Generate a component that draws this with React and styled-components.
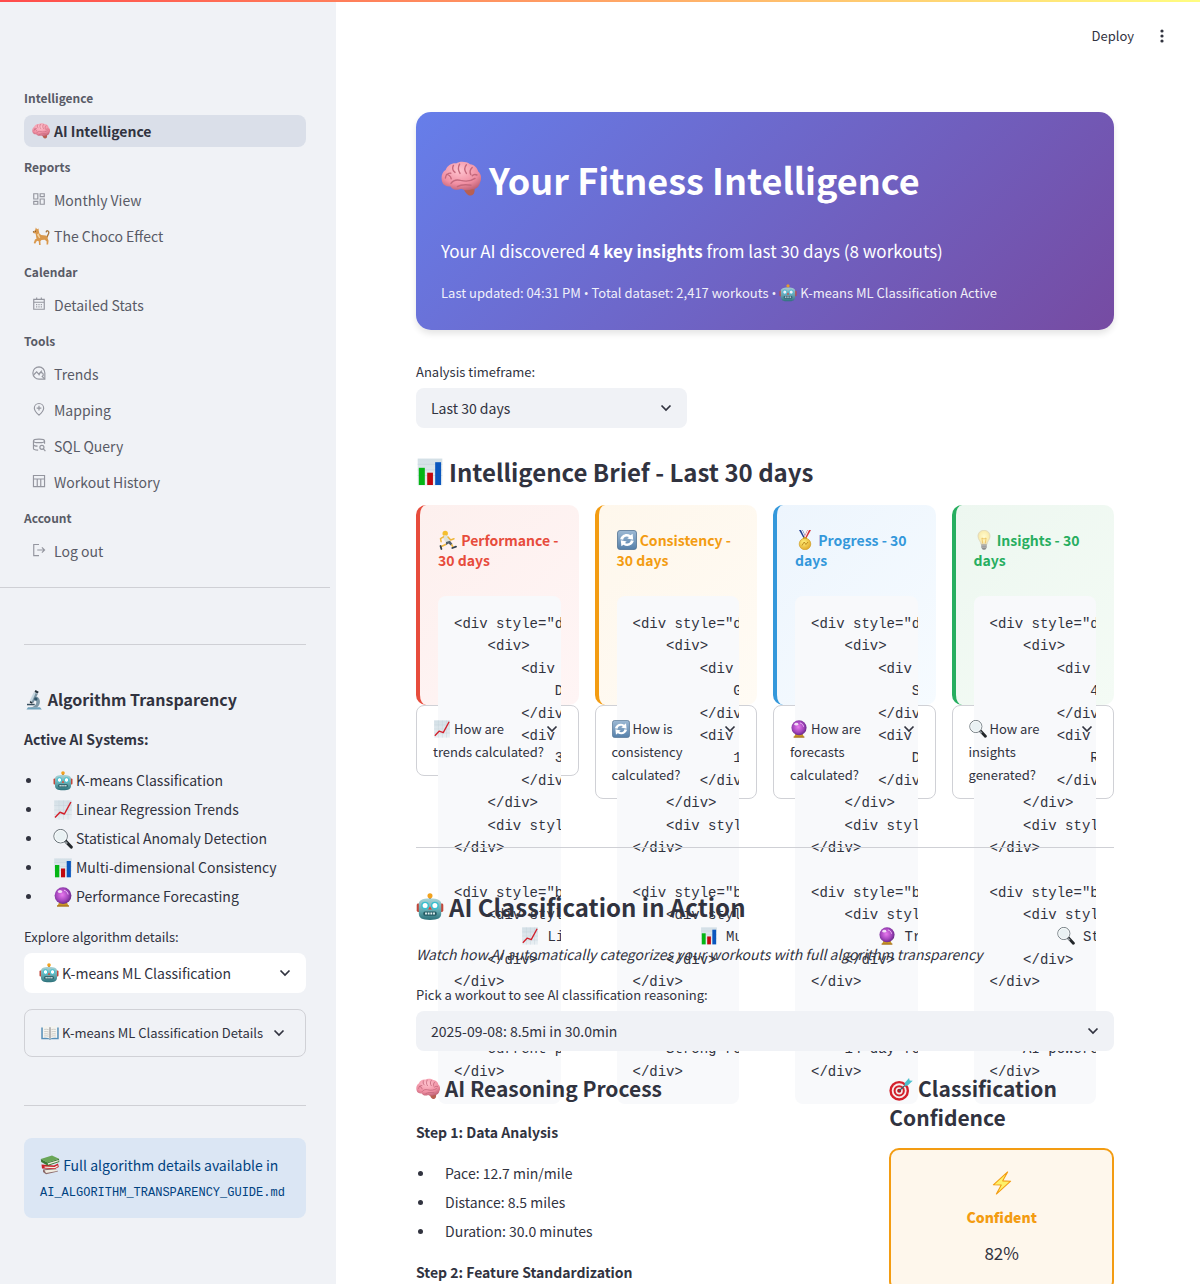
import React from "react";
import styled, { createGlobalStyle } from "styled-components";

const SANS = '"Noto Sans CJK SC", "Noto Sans", sans-serif';
const MONO = '"Liberation Mono", monospace';

const GlobalStyle = createGlobalStyle`
  *, *::before, *::after { box-sizing: border-box; }
  body {
    margin: 0;
    background: #fff;
    color: #31333f;
    font: 14px/22px ${SANS};
  }
  h1, h2, h3, p, ul, pre { margin: 0; padding: 0; }
  button, select { font: inherit; color: inherit; }
`;

/* ---------- pictographs ---------- */

const Glyph = styled.svg`
  display: inline-block;
  flex: none;
  width: ${(p) => p.$size}px;
  height: ${(p) => p.$size}px;
  margin: -4px 0;
  vertical-align: baseline;
`;

const HiddenDefs = styled.svg`
  position: absolute;
  width: 0;
  height: 0;
`;

function Defs() {
  return (
    <HiddenDefs aria-hidden="true">
      <defs>
        <linearGradient id="paper" x1="0" y1="0" x2="0" y2="1">
          <stop offset="0" stopColor="#d3dfe6" />
          <stop offset="1" stopColor="#e9eff3" />
        </linearGradient>
        <radialGradient id="pink" cx=".45" cy=".3" r=".8">
          <stop offset="0" stopColor="#ffc4cf" />
          <stop offset=".6" stopColor="#f08fa3" />
          <stop offset="1" stopColor="#b5576a" />
        </radialGradient>
        <linearGradient id="teal" x1="0" y1="0" x2="0" y2="1">
          <stop offset="0" stopColor="#a9d3d6" />
          <stop offset=".6" stopColor="#5fa5ac" />
          <stop offset="1" stopColor="#2b7079" />
        </linearGradient>
        <radialGradient id="orb" cx=".45" cy=".45" r=".6">
          <stop offset="0" stopColor="#e879ee" />
          <stop offset=".6" stopColor="#a446bd" />
          <stop offset="1" stopColor="#5c2380" />
        </radialGradient>
        <linearGradient id="steel" x1="0" y1="0" x2="0" y2="1">
          <stop offset="0" stopColor="#9db9d4" />
          <stop offset="1" stopColor="#5580aa" />
        </linearGradient>
        <radialGradient id="gold" cx=".4" cy=".35" r=".7">
          <stop offset="0" stopColor="#fff07a" />
          <stop offset="1" stopColor="#e0a526" />
        </radialGradient>
        <radialGradient id="bulb" cx=".5" cy=".45" r=".6">
          <stop offset="0" stopColor="#fffbd0" />
          <stop offset=".6" stopColor="#fbeeb0" />
          <stop offset="1" stopColor="#ddd6bd" />
        </radialGradient>
      </defs>
    </HiddenDefs>
  );
}

const art = {
  brain: (
    <>
      <path d="M11 13.500c.5 2.500 2 5 3.900 4.800 1.800-.2 2.300-2.300 1.600-4.500z" fill="#b85f51" />
      <path d="M.6 11.500C-.2 9 .5 6.500 2.300 5.500 3.200 3.200 5.400 2 7.500 2.200c2-1.200 5.200-1 7 .4 2.200.2 3.700 1.900 4.100 3.700 1.600 1.300 1.900 3.800.9 5.400-.4 2.200-2.100 3.500-3.900 3.400-2.100.9-4.200.6-5.500-.2-2.100 1.100-4.600.3-5.300-1.200-2.100.2-3.700-.600-4.200-2.200z" fill="url(#pink)" />
      <path d="M2.200 9.500c.2-1.600 1.500-2.500 2.700-2.400M5 12.200c1.200-1.700 3-2 4.800-1.500 2.500.6 5.200.4 7.200-1M6.200 3.200c-.6 1.200-.3 2.700.8 3.500M9.300 2.600c-.8 1.400-.8 3 .2 4.600M12.700 2.900c-1 1.200-1 2.900 0 4.300M15.600 4.200c-1.100 1-1.300 2.300-.7 3.600M18 8c-1-.5-1.800-.3-2.400.4M8.200 13.800c1.800-1.100 4.500-1 6.800-.7M2.700 7.700c1 .1 2.200 1 2.400 2.200" fill="none" stroke="#c4687c" strokeWidth=".7" strokeLinecap="round" />
    </>
  ),
  dog: (
    <>
      <path d="M17 11c-.3-1.800 1.800-2.800 1.700-5-.1-2.200-2.500-2.300-2.900-.6" fill="none" stroke="#a9763f" strokeWidth="1.500" strokeLinecap="round" />
      <path d="M.8 5.500l2.600-1.800L4.300.5l1.300 2 1.700-.9.2 2.700.7 3 2 1.600 4.800.5c1.900.3 2.700 1.900 2.400 3.400l1 2.600-.5 4.100h-1.800l.2-3.400-2.100-1.900-3.600.2-1.300 1.500.3 4.200H7.900l-.4-4.200-2-.5-2 3.200-1.600-.8 1.400-3.900 1.700-.9L4 7.300 2 7z" fill="#d9984c" />
      <path d="M5.500 8.500l2.500 4 1.200-.6-2-5z" fill="#f3d3a0" />
      <path d="M3.400 4.800h.9" stroke="#4a2c12" strokeWidth=".9" />
      <path d="M.8 5.500l1.100-.8.400 1.100z" fill="#3a2413" />
    </>
  ),
  robot: (
    <>
      <path d="M10 2v3" stroke="#9a6a3c" strokeWidth="1.600" />
      <circle cx="10" cy="2" r="1.800" fill="#f2a21e" />
      <rect x=".5" y="7.500" width="3" height="6" rx="1" fill="#c4473a" />
      <rect x="16.500" y="7.500" width="3" height="6" rx="1" fill="#c4473a" />
      <path d="M2 8c0-2.700 2-4 8-4s8 1.300 8 4v6.700c0 3.200-2.300 4.600-8 4.600s-8-1.400-8-4.600z" fill="url(#teal)" />
      <circle cx="6.500" cy="9" r="2.300" fill="#fff" stroke="#37bfd0" strokeWidth="1" />
      <circle cx="13.500" cy="9" r="2.300" fill="#fff" stroke="#37bfd0" strokeWidth="1" />
      <path d="M10 9.500l1.300 2.300H8.700z" fill="#e0452f" />
      <rect x="5.200" y="13.300" width="9.600" height="2.900" rx="1.200" fill="#245a63" />
      <path d="M6.500 14.700h7" stroke="#e6f4f4" strokeWidth="1.400" strokeDasharray="1.300 .6" />
    </>
  ),
  microscope: (
    <>
      <path d="M2.500 19.500l1.500-2.300h12l1.800 2.300z" fill="#6fa2bb" />
      <path d="M12.500 6.500c4.400 1.600 4.700 8 .4 11H6.700c4.700-1 7-4.600 4.800-8z" fill="#7d97a6" />
      <path d="M3 13.800h7.700v1.500H3z" fill="#384f5e" />
      <path d="M9.800 2.200l3.900 1.900-4.200 8.600-3.900-1.800z" fill="#c5d6df" />
      <path d="M11.700 3l2 1.100-4.200 8.700-1.800-.9z" fill="#7891a0" />
      <path d="M11.500.1l3.200 1.600-1 1.900-3.200-1.600z" fill="#26323b" />
      <path d="M6 11l2.700 1.200-.6 1.500-2.300-1z" fill="#26323b" />
      <circle cx="11.800" cy="9" r="1.700" fill="#31566b" />
    </>
  ),
  trend: (
    <>
      <rect x="1.200" y=".4" width="17.600" height="19.200" fill="url(#paper)" />
      <path d="M1.200 5.500h17.600M1.200 10h17.600M1.200 14.500h17.600M6 .4v19.200M10.500 .4v19.200M15 .4v19.200" stroke="#c2d0d8" strokeWidth=".4" />
      <path d="M2 17.500l5-5.200 4.400 1.700L17.900 2" fill="none" stroke="#d2212c" strokeWidth="1.500" strokeLinejoin="round" />
    </>
  ),
  bars: (
    <>
      <rect x="1.200" y=".4" width="17.600" height="19.200" fill="url(#paper)" />
      <path d="M1.200 4.500h17.600M1.200 8.500h17.600M1.200 12.500h17.600" stroke="#c2d0d8" strokeWidth=".4" />
      <rect x="2" y="7" width="4.300" height="12.300" fill="#04b514" />
      <rect x="8" y="10.500" width="4.100" height="8.800" fill="#c2080f" />
      <rect x="13.700" y="3" width="4.200" height="16.300" fill="#0a56be" />
    </>
  ),
  search: (
    <>
      <path d="M12.800 12.300l5.400 5.700" stroke="#22262a" strokeWidth="3.200" strokeLinecap="round" />
      <path d="M12.200 12.600l2 2" stroke="#8f979c" strokeWidth="2" />
      <circle cx="7.600" cy="7.200" r="6.700" fill="#e9f1f3" stroke="#5b666c" strokeWidth="1" />
      <circle cx="7.600" cy="7.200" r="5.800" fill="none" stroke="#fff" strokeWidth=".8" />
    </>
  ),
  orb: (
    <>
      <path d="M4.500 19l2-4.500h7l2 4.500z" fill="#c99727" />
      <path d="M4 18.300h12v1.400H4z" fill="#a8741c" />
      <circle cx="10" cy="8.600" r="8.400" fill="url(#orb)" />
      <ellipse cx="7" cy="4.600" rx="2.200" ry="1.500" fill="#fff" opacity=".8" />
      <path d="M11 3.200c2.200.5 3.800 2.200 4.100 4.300" stroke="#f5c8fa" strokeWidth=".9" fill="none" />
    </>
  ),
  book: (
    <>
      <path d="M.3 4h19.400v13H11l-1 .8-1-.8H.3z" fill="#568fb8" />
      <path d="M2 2.800c3-.8 6-.6 8 .8 2-1.400 5-1.600 8-.8v12.700c-3-.6-6-.4-8 .8-2-1.200-5-1.400-8-.8z" fill="#f5f4f0" />
      <path d="M10 3.600v12.600" stroke="#8c8c8c" strokeWidth="1.300" />
      <path d="M3.500 6c1.800-.3 3.600-.2 5 .3M3.500 8.500c1.800-.3 3.600-.2 5 .3M3.500 11c1.800-.3 3.600-.2 5 .3M3.500 13.300c1.800-.3 3.600-.2 5 .3M16.500 6c-1.800-.3-3.600-.2-5 .3M16.500 8.500c-1.800-.3-3.600-.2-5 .3M16.500 11c-1.800-.3-3.600-.2-5 .3M16.500 13.300c-1.800-.3-3.600-.2-5 .3" fill="none" stroke="#b5b5b0" strokeWidth=".7" />
    </>
  ),
  books: (
    <>
      <path d="M3 14.500l12-1.500 3 3.500L6 19.300l-3-2.300z" fill="#8b6a6a" />
      <path d="M4.500 15.200l12-1 .8 1.800L6 17.900z" fill="#f0ece0" />
      <path d="M1.500 9.500l12.500 1 4-2 .8 3.500-4 2L2 13.500z" fill="#c81f28" />
      <path d="M4.500 11.500l10 .5 3-1.700.2 1.400-3 1.500-10-.5z" fill="#f3eee2" />
      <path d="M.8 4L12 .5l7 3.300L7.500 7.500z" fill="#69a657" />
      <path d="M.8 4L7.500 7.500l11.500-3.700.3 3.200L8 10.700 1.200 7z" fill="#3d7a34" />
      <path d="M7.800 8.300l10.800-3.300.1 1.300L8 9.700z" fill="#f0ece0" />
    </>
  ),
  runner: (
    <>
      <circle cx="7.200" cy="3.400" r="2.700" fill="#f5be2e" />
      <path d="M4.800 5.900c1.900-1.100 4.600-.5 5.800 1.300l1.400 4.300-3.800 1.600-2.800-4z" fill="#dfe2dc" />
      <path d="M5.500 6.900L2.500 8.600l.6 3.100M10 7.100l2.700 2.900 3.300-1.300" fill="none" stroke="#eeb63b" strokeWidth="1.500" strokeLinecap="round" strokeLinejoin="round" />
      <path d="M8 12l4-1.200 2.500 3.200-1.800 1.400-2.100-1.800-2.800 1.700z" fill="#55606b" />
      <path d="M13.500 14.500l1.500 2.600M8 14.300l-2.500 1.200-2.800 1.300" stroke="#eeb63b" strokeWidth="1.600" fill="none" />
      <path d="M14.300 18l3.700-1.400M2.500 16l.9 3" stroke="#34404c" strokeWidth="1.800" strokeLinecap="round" />
    </>
  ),
  cycle: (
    <>
      <rect x=".5" y=".5" width="19" height="19" rx="2.500" fill="url(#steel)" stroke="#537494" strokeWidth=".8" />
      <path d="M3.200 9.200C4.200 5 9.300 2.500 13.600 5.300l2-1.600.6 6.100-5.900-1.400 1.700-1.400C9.600 5.700 6.500 6.800 6.200 9.700zM16.800 10.800c-1 4.200-6.100 6.700-10.400 3.900l-2 1.600-.6-6.100 5.900 1.400L8 13c2.400 1.300 5.500.2 5.800-2.700z" fill="#fff" />
    </>
  ),
  medal: (
    <>
      <path d="M4 0h3.600l3.700 8-2 1.500z" fill="#233f93" />
      <path d="M6 0h1.200l3.500 7.500-.8.600z" fill="#fff" />
      <path d="M16 0h-3.600L8.700 8l2 1.500z" fill="#d52f3a" />
      <path d="M14 0h-1.200L9.300 7.500l.8.600z" fill="#fff" />
      <rect x="8" y="7.300" width="4" height="2" rx=".6" fill="#c79a1d" />
      <circle cx="10" cy="14" r="5.800" fill="url(#gold)" stroke="#cc9819" strokeWidth=".6" />
      <path d="M7 15.500l2.200-3.500 1.700 2.500L13 12" stroke="#b9851a" strokeWidth=".9" fill="none" />
    </>
  ),
  bulb: (
    <>
      <path d="M10 .3C6.200.3 3.900 3 3.900 6.200c0 3.300 2.700 4.800 3.100 8.400h6c.4-3.600 3.100-5.100 3.100-8.400C16.100 3 13.800.3 10 .3z" fill="url(#bulb)" stroke="#d8cfae" strokeWidth=".5" />
      <path d="M8.700 13.500L7.900 8l2.100 1 2.100-1-.8 5.500" fill="none" stroke="#e8b84a" strokeWidth=".7" />
      <path d="M7.300 14.500h5.400v3.300l-1.500 2H8.800l-1.500-2z" fill="#8d8f8e" />
      <path d="M7.300 15.700h5.400M7.300 17.200h5.400" stroke="#d3d4d2" strokeWidth=".6" />
    </>
  ),
  target: (
    <>
      <circle cx="8.500" cy="11.500" r="8.200" fill="#d4202b" />
      <circle cx="8.500" cy="11.500" r="6.200" fill="#f6eeee" />
      <circle cx="8.500" cy="11.500" r="4.700" fill="#d4202b" />
      <circle cx="8.500" cy="11.500" r="3" fill="#f6eeee" />
      <circle cx="8.500" cy="11.500" r="1.700" fill="#b8141f" />
      <path d="M8.500 11.500L16 4.500" stroke="#3c5f68" strokeWidth="1" />
      <path d="M13.200 4.800L16.700.8l.5 2.200 2.600.2-4.200 3.900-2.700.3z" fill="#4cc0cc" />
    </>
  ),
  bolt: (
    <path d="M14.700.8L2.800 11.500l6.600.2L5.300 19.200 17.200 8.500l-6.600-.3z" fill="#fdf16a" stroke="#f39c12" strokeWidth=".9" strokeLinejoin="round" />
  ),
};

function Emoji({ name, size = 20 }) {
  return (
    <Glyph $size={size} viewBox="0 0 20 20" aria-hidden="true">
      {art[name]}
    </Glyph>
  );
}

/* ---------- line icons ---------- */

const LineSvg = styled.svg`
  flex: none;
  width: 14px;
  height: 14px;
  margin: 0 4px 2px 0;
  fill: none;
  stroke: #94969f;
  stroke-width: 2;
`;

const lines = {
  dashboard: <path d="M3 3h7v9H3zM14 3h7v5h-7zM14 12h7v9h-7zM3 16h7v5H3z" />,
  calendar: (
    <>
      <path d="M3 4h18v17H3zM3 9h18M8 1v4M16 1v4" />
      <path d="M7 13h11M7 17h11" strokeDasharray="2 2" />
    </>
  ),
  trends: (
    <>
      <path d="M12 1.500a10.500 10.500 0 1 0 0 21h10V12A10.500 10.500 0 0 0 12 1.500z" />
      <path d="M3 15l5-5 3.500 4L17 8M12.500 16a3.500 3.500 0 1 1 5 2l4 4" />
    </>
  ),
  pin: <path d="M12 22.500c5.500-5 8-8.500 8-12a8 8 0 0 0-16 0c0 3.500 2.500 7 8 12zM12 6.500v8M8 10.500h8" />,
  database: (
    <>
      <ellipse cx="12" cy="5" rx="9.500" ry="3" />
      <path d="M2.500 5v13c0 1.500 3 2.700 8 2.900M2.500 11.500c.5 1.500 3 2.300 7 2.500M21.500 5v5" />
      <circle cx="17" cy="16" r="3.500" />
      <path d="M19.500 18.500l3.500 4" />
    </>
  ),
  table: <path d="M2.500 2.500h19v19h-19zM2.500 8.500h19M9 8.500v13M15 8.500v13" />,
  logout: <path d="M12 2.500H3v19h9M9 12h12M17 7.500l4.500 4.500-4.500 4.500" />,
};

function LineIcon({ name }) {
  return (
    <LineSvg viewBox="0 0 24 24" aria-hidden="true">
      {lines[name]}
    </LineSvg>
  );
}

const ChevronSvg = styled.svg`
  flex: none;
  width: 12px;
  height: 8px;
  fill: none;
  stroke: #31333f;
  stroke-width: 1.700;
  pointer-events: none;
`;

const Chevron = () => (
  <ChevronSvg viewBox="0 0 12 8" aria-hidden="true">
    <path d="M1.500 1.500L6 6l4.500-4.500" />
  </ChevronSvg>
);

/* ---------- shell ---------- */

const Page = styled.div`
  display: flex;
  flex-direction: column;
  height: 100vh;
  overflow: hidden;
`;

const Ribbon = styled.div`
  flex: none;
  height: 2px;
  background: linear-gradient(90deg, #ff4b4b, #fffd80);
`;

const Shell = styled.div`
  display: flex;
  flex: 1;
  min-height: 0;
`;

const Sidebar = styled.aside`
  flex: none;
  width: 336px;
  padding: 78px 6px 66px 0;
  overflow-y: auto;
  scrollbar-width: none;
  background: #f0f2f6;
`;

const Main = styled.main`
  flex: 1;
  min-width: 0;
  overflow-y: auto;
  scrollbar-width: none;
`;

const TopBar = styled.header`
  display: flex;
  align-items: center;
  justify-content: flex-end;
  gap: 16px;
  height: 68px;
  padding: 0 26px;
`;

const BarButton = styled.button`
  display: flex;
  align-items: center;
  justify-content: center;
  min-width: 24px;
  padding: 0;
  border: 0;
  background: none;
  font-size: 13px;
`;

const Content = styled.div`
  padding: 42px 86px 80px 80px;
`;

const Rule = styled.hr`
  height: 1px;
  margin: ${(p) => p.$top}px 0 ${(p) => p.$bottom}px;
  border: 0;
  background: #cfd0d5;
`;

/* ---------- navigation ---------- */

const Nav = styled.nav`
  padding: 0 24px;
`;

const NavSection = styled.section`
  display: flex;
  flex-direction: column;
  gap: 4px;
  padding-bottom: 2px;
`;

const NavHeading = styled.h2`
  padding: 7px 0 3px;
  color: #595b66;
  font-size: 12px;
  font-weight: 600;
  line-height: 21px;
`;

const NavLink = styled.a`
  display: flex;
  align-items: center;
  gap: 4px;
  height: 32px;
  padding: 0 8px;
  border-radius: 8px;
  background: ${(p) => (p.$active ? "#dadfe9" : "transparent")};
  color: ${(p) => (p.$active ? "#31333f" : "#595b66")};
  font-weight: ${(p) => (p.$active ? 600 : 400)};
  text-decoration: none;
`;

const IconSlot = styled.span`
  display: flex;
  justify-content: center;
  width: 18px;
`;

const navigation = [
  ["Intelligence", [["AI Intelligence", "brain"]]],
  ["Reports", [["Monthly View", "dashboard"], ["The Choco Effect", "dog"]]],
  ["Calendar", [["Detailed Stats", "calendar"]]],
  ["Tools", [["Trends", "trends"], ["Mapping", "pin"], ["SQL Query", "database"], ["Workout History", "table"]]],
  ["Account", [["Log out", "logout"]]],
];

function Navigation() {
  return (
    <Nav aria-label="Pages">
      {navigation.map(([heading, items]) => (
        <NavSection key={heading}>
          <NavHeading>{heading}</NavHeading>
          {items.map(([label, icon]) => (
            <NavLink key={label} href="#" $active={label === "AI Intelligence"}>
              <IconSlot>{art[icon] ? <Emoji name={icon} size={18} /> : <LineIcon name={icon} />}</IconSlot>
              {label}
            </NavLink>
          ))}
        </NavSection>
      ))}
    </Nav>
  );
}

/* ---------- shared widgets ---------- */

const Label = styled.label`
  display: block;
  margin-bottom: 5px;
  font-size: 13px;
  line-height: 22px;
`;

const SelectBox = styled.div`
  display: flex;
  align-items: center;
  gap: 3px;
  height: 40px;
  padding: 0 15px;
  border-radius: 8px;
  background: ${(p) => (p.$light ? "#fff" : "#f0f2f6")};
`;

const Select = styled.select`
  flex: 1;
  min-width: 0;
  height: 40px;
  padding: 0;
  border: 0;
  appearance: none;
  background: none;
`;

function SelectField({ id, label, value, icon, light }) {
  return (
    <div>
      <Label htmlFor={id}>{label}</Label>
      <SelectBox $light={light}>
        {icon && <Emoji name={icon} />}
        <Select id={id}>
          <option>{value}</option>
        </Select>
        <Chevron />
      </SelectBox>
    </div>
  );
}

const Expander = styled.details`
  border: 1px solid #d0d1d6;
  border-radius: 8px;
`;

const Summary = styled.summary`
  position: relative;
  display: flex;
  align-items: flex-start;
  justify-content: space-between;
  padding: 11px 20px 12px 16px;
  font-size: 13px;
  line-height: 23px;
  list-style: none;

  ${ChevronSvg} { margin-top: 8px; }
`;

const Bullets = styled.ul`
  list-style: none;

  li {
    display: flex;
    align-items: center;
    gap: 3px;
    line-height: 29px;
  }

  li::before {
    content: "";
    width: 5px;
    height: 5px;
    margin: 0 19px 0 2px;
    border-radius: 50%;
    background: #31333f;
  }
`;

/* ---------- sidebar details ---------- */

const SideBody = styled.div`
  padding: 0 24px;
`;

const SideTitle = styled.h2`
  margin-bottom: 17px;
  font-size: 16px;
  font-weight: 600;
  line-height: 24px;
`;

const Strong = styled.p`
  margin-bottom: 16px;
  font-weight: 600;
`;

const SideForm = styled.div`
  display: grid;
  gap: 16px;
  margin-top: 15px;
`;

const Info = styled.div`
  padding: 15px 16px;
  border-radius: 8px;
  background: #dbe6f4;
  color: #004280;
  line-height: 25px;
  white-space: nowrap;

  code { font: 12px ${MONO}; }
`;

/* ---------- hero ---------- */

const Hero = styled.section`
  margin-bottom: 31px;
  padding: 25px;
  border-radius: 15px;
  background: linear-gradient(135deg, #667eea 0%, #764ba2 100%);
  box-shadow: 0 4px 6px rgba(0, 0, 0, 0.1);
  color: #fff;

  h1 {
    display: flex;
    align-items: center;
    gap: 8px;
    padding: 17px 0 23px;
    font-size: 36px;
    font-weight: 700;
    line-height: 50px;
  }
`;

const Lead = styled.p`
  margin-top: 9px;
  font-size: 17px;
  line-height: 30px;
`;

const Meta = styled.p`
  margin-top: 15px;
  font-size: 13px;
  line-height: 24px;
  opacity: 0.9;
`;

const Dot = styled.span`
  font-family: "Open Sans", sans-serif;
`;

/* ---------- brief ---------- */

const Narrow = styled.div`
  max-width: 271px;
`;

const SectionTitle = styled.h2`
  display: flex;
  align-items: center;
  gap: 5px;
  margin: ${(p) => p.$top}px 0 ${(p) => p.$bottom}px;
  font-size: 24px;
  font-weight: 600;
  line-height: 34px;
`;

const CardGrid = styled.div`
  display: grid;
  grid-template-columns: repeat(4, minmax(0, 1fr));
  gap: 16px;
`;

const Card = styled.article`
  height: 200px;
  padding: 25px 18px;
  border-left: 4px solid ${(p) => p.$accent};
  border-radius: 10px;
  background: linear-gradient(135deg, ${(p) => p.$from}, ${(p) => p.$to});

  h3 {
    margin-bottom: 26px;
    color: ${(p) => p.$accent};
    font-size: 14px;
    font-weight: 700;
    line-height: 20px;
  }
`;

const Code = styled.pre`
  position: relative;
  padding: 17px 16px 21px;
  overflow: hidden;
  border-radius: 8px;
  background: #f8f9fb;
  font: 14px/1.6 ${MONO};
`;

const cards = [
  {
    icon: "runner", title: "Performance - 30 days", accent: "#e74c3c", from: "#fdf0ee", to: "#fff5f5",
    value: "D", detail: "3", method: ["trend", "Li"], note: "Current p",
    ask: "How are trends calculated?", askIcon: "trend",
  },
  {
    icon: "cycle", title: "Consistency - 30 days", accent: "#f39c12", from: "#fef7ec", to: "#fffbf4",
    value: "G", detail: "1", method: ["bars", "Mu"], note: "Strong ro",
    ask: "How is consistency calculated?", askIcon: "cycle",
  },
  {
    icon: "medal", title: "Progress - 30 days", accent: "#3498db", from: "#edf5fd", to: "#f6fbff",
    value: "S", detail: "D", method: ["orb", "Tr"], note: "14-day fo",
    ask: "How are forecasts calculated?", askIcon: "orb",
  },
  {
    icon: "bulb", title: "Insights - 30 days", accent: "#27ae60", from: "#edf7f0", to: "#f4fbf5",
    value: "4", detail: "R", method: ["search", "St"], note: "AI-powere",
    ask: "How are insights generated?", askIcon: "search",
  },
];

function BriefCard({ card }) {
  return (
    <div>
      <Card $accent={card.accent} $from={card.from} $to={card.to}>
        <h3>
          <Emoji name={card.icon} /> {card.title}
        </h3>
        <Code>
          {`<div style="d
    <div>
        <div 
            ${card.value}
        </div
        <div 
            ${card.detail}
        </div
    </div>
    <div styl
</div>

<div style="b
    <div styl
        `}
          <Emoji name={card.method[0]} size={18} />
          {` ${card.method[1]}
    </div>
</div>

<div style="m
    ${card.note}
</div>`}
        </Code>
      </Card>
      <Expander>
        <Summary>
          <span>
            <Emoji name={card.askIcon} size={18} /> {card.ask}
          </span>
          <Chevron />
        </Summary>
      </Expander>
    </div>
  );
}

/* ---------- classification ---------- */

const Overlay = styled.section`
  position: relative;
`;

const Italic = styled.p`
  margin-bottom: 19px;
  font-style: italic;
`;

const Split = styled.div`
  display: grid;
  grid-template-columns: 2fr 1fr;
  gap: 24px;
  margin-top: 23px;
`;

const SubTitle = styled.h3`
  margin-bottom: ${(p) => p.$bottom}px;
  font-size: 21px;
  font-weight: 600;
  line-height: 29px;
`;

const Step = styled.div`
  margin-bottom: 15px;
`;

const Confidence = styled.div`
  display: flex;
  flex-direction: column;
  align-items: center;
  padding: 25px 16px;
  border: 2px solid #f39c12;
  border-radius: 10px;
  background: #fef7ec;

  strong {
    margin-top: 15px;
    color: #f39c12;
    font-weight: 800;
  }

  span {
    margin-top: 14px;
    font-size: 17px;
  }
`;

export default function App() {
  return (
    <Page>
      <GlobalStyle />
      <Defs />
      <Ribbon />
      <Shell>
        <Sidebar>
          <Navigation />
          <Rule $top={18} $bottom={56} />
          <SideBody>
            <Rule $top={0} $bottom={42} />
            <SideTitle>
              <Emoji name="microscope" /> Algorithm Transparency
            </SideTitle>
            <Strong>Active AI Systems:</Strong>
            <Bullets>
              <li><Emoji name="robot" /> K-means Classification</li>
              <li><Emoji name="trend" /> Linear Regression Trends</li>
              <li><Emoji name="search" /> Statistical Anomaly Detection</li>
              <li><Emoji name="bars" /> Multi-dimensional Consistency</li>
              <li><Emoji name="orb" /> Performance Forecasting</li>
            </Bullets>
            <SideForm>
              <SelectField id="algorithm" label="Explore algorithm details:" value="K-means ML Classification" icon="robot" light />
              <Expander>
                <Summary>
                  <span><Emoji name="book" size={18} /> K-means ML Classification Details</span>
                  <Chevron />
                </Summary>
              </Expander>
            </SideForm>
            <Rule $top={48} $bottom={32} />
            <Info>
              <Emoji name="books" /> Full algorithm details available in
              <br />
              <code>AI_ALGORITHM_TRANSPARENCY_GUIDE.md</code>
            </Info>
          </SideBody>
        </Sidebar>
        <Main>
          <TopBar>
            <BarButton>Deploy</BarButton>
            <BarButton aria-label="Menu">
              <svg width="4" height="14" viewBox="0 0 4 14" fill="#31333f" aria-hidden="true">
                <circle cx="2" cy="2" r="1.600" />
                <circle cx="2" cy="7" r="1.600" />
                <circle cx="2" cy="12" r="1.600" />
              </svg>
            </BarButton>
          </TopBar>
          <Content>
            <Hero>
              <h1><Emoji name="brain" size={40} />Your Fitness Intelligence</h1>
              <Lead>Your AI discovered <b>4 key insights</b> from last 30 days (8 workouts)</Lead>
              <Meta>
                Last updated: 04:31 PM <Dot>•</Dot> Total dataset: 2,417 workouts <Dot>•</Dot> <Emoji name="robot" size={18} /> K-means ML Classification Active
              </Meta>
            </Hero>
            <Narrow>
              <SelectField id="timeframe" label="Analysis timeframe:" value="Last 30 days" />
            </Narrow>
            <SectionTitle $top={27} $bottom={16}>
              <Emoji name="bars" size={28} />Intelligence Brief - Last 30 days
            </SectionTitle>
            <CardGrid>
              {cards.map((card) => <BriefCard key={card.title} card={card} />)}
            </CardGrid>
            <Overlay>
              <Rule $top={48} $bottom={42} />
              <SectionTitle $top={0} $bottom={19}>
                <Emoji name="robot" size={28} />AI Classification in Action
              </SectionTitle>
              <Italic>Watch how AI automatically categorizes your workouts with full algorithm transparency</Italic>
              <SelectField id="workout" label="Pick a workout to see AI classification reasoning:" value="2025-09-08: 8.5mi in 30.0min" />
              <Split>
                <div>
                  <SubTitle $bottom={18}><Emoji name="brain" size={24} /> AI Reasoning Process</SubTitle>
                  <Step>
                    <Strong>Step 1: Data Analysis</Strong>
                    <Bullets>
                      <li>Pace: 12.7 min/mile</li>
                      <li>Distance: 8.5 miles</li>
                      <li>Duration: 30.0 minutes</li>
                    </Bullets>
                  </Step>
                  <Strong>Step 2: Feature Standardization</Strong>
                </div>
                <div>
                  <SubTitle $bottom={16}><Emoji name="target" size={24} /> Classification Confidence</SubTitle>
                  <Confidence>
                    <Emoji name="bolt" size={24} />
                    <strong>Confident</strong>
                    <span>82%</span>
                  </Confidence>
                </div>
              </Split>
            </Overlay>
          </Content>
        </Main>
      </Shell>
    </Page>
  );
}
